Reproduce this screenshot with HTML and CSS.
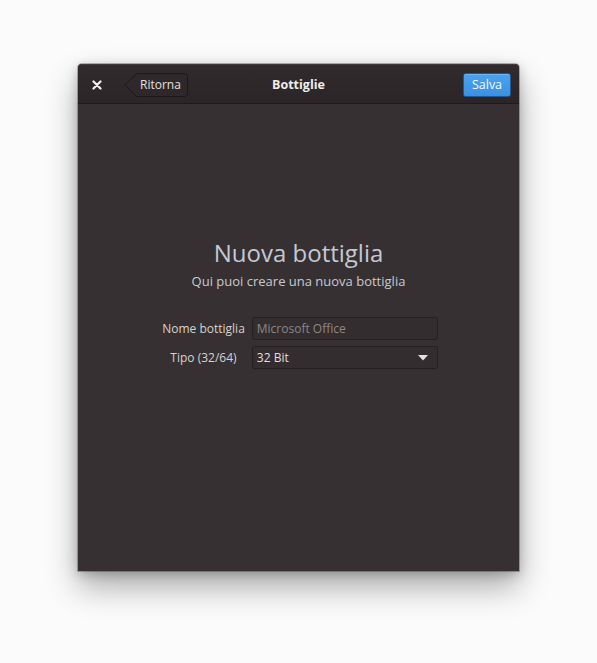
FILE: index.html
```html
<!DOCTYPE html>
<html lang="it">
<head>
<meta charset="utf-8">
<title>Bottiglie</title>
<link rel="stylesheet" href="styles.css">
</head>
<body>
<div class="window">
  <header class="headerbar">
    <div class="hb-start">
      <button class="close-btn" aria-label="Chiudi">
        <svg width="10" height="10" viewBox="0 0 10 10"><path d="M1.5 1.5 L8.5 8.5 M8.5 1.5 L1.5 8.5" stroke="#f2f0f0" stroke-width="2.2" stroke-linecap="round"/></svg>
      </button>
      <button class="back-btn">
        <svg class="back-shape" width="64" height="24" viewBox="0 0 64 24"><path d="M12.5 0.5 H60.5 a3 3 0 0 1 3 3 V20.5 a3 3 0 0 1 -3 3 H12.5 L1 12 Z" fill="#2e282a" stroke="#1c1819" stroke-width="1"/></svg>
        <span class="back-label">Ritorna</span>
      </button>
    </div>
    <div class="hb-title">Bottiglie</div>
    <div class="hb-end">
      <button class="save-btn">Salva</button>
    </div>
  </header>
  <main class="content">
    <h1 class="title">Nuova bottiglia</h1>
    <p class="subtitle">Qui puoi creare una nuova bottiglia</p>
    <div class="form">
      <label class="lbl">Nome bottiglia</label>
      <div class="entry"><span class="placeholder">Microsoft Office</span></div>
      <label class="lbl">Tipo (32/64)</label>
      <div class="combo"><span>32 Bit</span>
        <svg width="10" height="6" viewBox="0 0 10 6"><path d="M0 0 H10 L5 5.5 Z" fill="#e4e0e1"/></svg>
      </div>
    </div>
  </main>
</div>
</body>
</html>
```

FILE: styles.css
```css
html, body {
  margin: 0;
  padding: 0;
}
body {
  width: 597px;
  height: 663px;
  background: #fbfbfb;
  font-family: "Open Sans", "Noto Sans", sans-serif;
  padding: 64px 0 0 78px;
  box-sizing: border-box;
  overflow: hidden;
}
.window {
  width: 441px;
  height: 507px;
  display: flex;
  flex-direction: column;
  background: #363032;
  border-radius: 4px 4px 0 0;
  box-shadow: 0 16px 32px rgba(0,0,0,0.32), 0 3px 12px rgba(0,0,0,0.22), 0 0 0 1px rgba(0,0,0,0.25);
}
.headerbar {
  border-bottom: 1px solid #1f1b1c;
  border-radius: 4px 4px 0 0;
  background: linear-gradient(#312b2d, #2b2527);
  box-shadow: inset 0 1px 0 rgba(255,255,255,0.08);
  display: flex;
  align-items: center;
  position: relative;
  padding: 2px 8px 0 10px;
  box-sizing: border-box;
  height: 40px;
}
.hb-start {
  display: flex;
  align-items: center;
  gap: 18px;
}
button {
  font-family: inherit;
  border: none;
  background: none;
  padding: 0;
  margin: 0;
  cursor: default;
}
.close-btn {
  display: flex;
  align-items: center;
  justify-content: center;
  padding: 4px;
}
.back-btn {
  position: relative;
  width: 64px;
  height: 24px;
  display: flex;
  align-items: center;
}
.back-shape {
  position: absolute;
  left: 0;
  top: 0;
}
.back-label {
  position: relative;
  padding-left: 16px;
  font-size: 12px;
  color: #e4e0e1;
  line-height: 24px;
}
.hb-title {
  position: absolute;
  left: 0;
  right: 0;
  top: 2px;
  bottom: 0;
  display: flex;
  align-items: center;
  justify-content: center;
  font-weight: 700;
  font-size: 12.5px;
  color: #efeded;
  pointer-events: none;
}
.hb-end {
  margin-left: auto;
}
.save-btn {
  width: 48px;
  height: 24px;
  border-radius: 2.5px;
  background: linear-gradient(#4aa2ef, #3a91e3);
  border: 1px solid #1c5996;
  box-shadow: inset 0 1px 0 rgba(255,255,255,0.2);
  color: #f5f9fd;
  font-size: 12.5px;
  box-sizing: border-box;
  line-height: 21px;
}
.content {
  flex: 1;
  display: flex;
  flex-direction: column;
  align-items: center;
  padding-top: 134px;
}
.title {
  margin: 0;
  font-size: 24px;
  font-weight: 400;
  line-height: 30px;
  color: #c3c9d3;
}
.subtitle {
  margin: 4px 0 0;
  font-size: 13px;
  line-height: 18px;
  color: #c6cad2;
}
.form {
  margin-top: 27px;
  display: grid;
  grid-template-columns: auto 186px;
  column-gap: 7px;
  row-gap: 6px;
  align-items: center;
  margin-left: 3px;
}
.lbl {
  font-size: 12px;
  color: #d6d2d3;
  text-align: center;
}
.entry, .combo {
  height: 23px;
  box-sizing: border-box;
  border: 1px solid #241f21;
  border-radius: 2.5px;
  background: #332d2f;
  display: flex;
  align-items: center;
  padding: 0 4px;
  font-size: 12px;
}
.placeholder {
  color: #8d8789;
}
.combo {
  justify-content: space-between;
  color: #e2dfe0;
  padding-right: 9px;
}
```
